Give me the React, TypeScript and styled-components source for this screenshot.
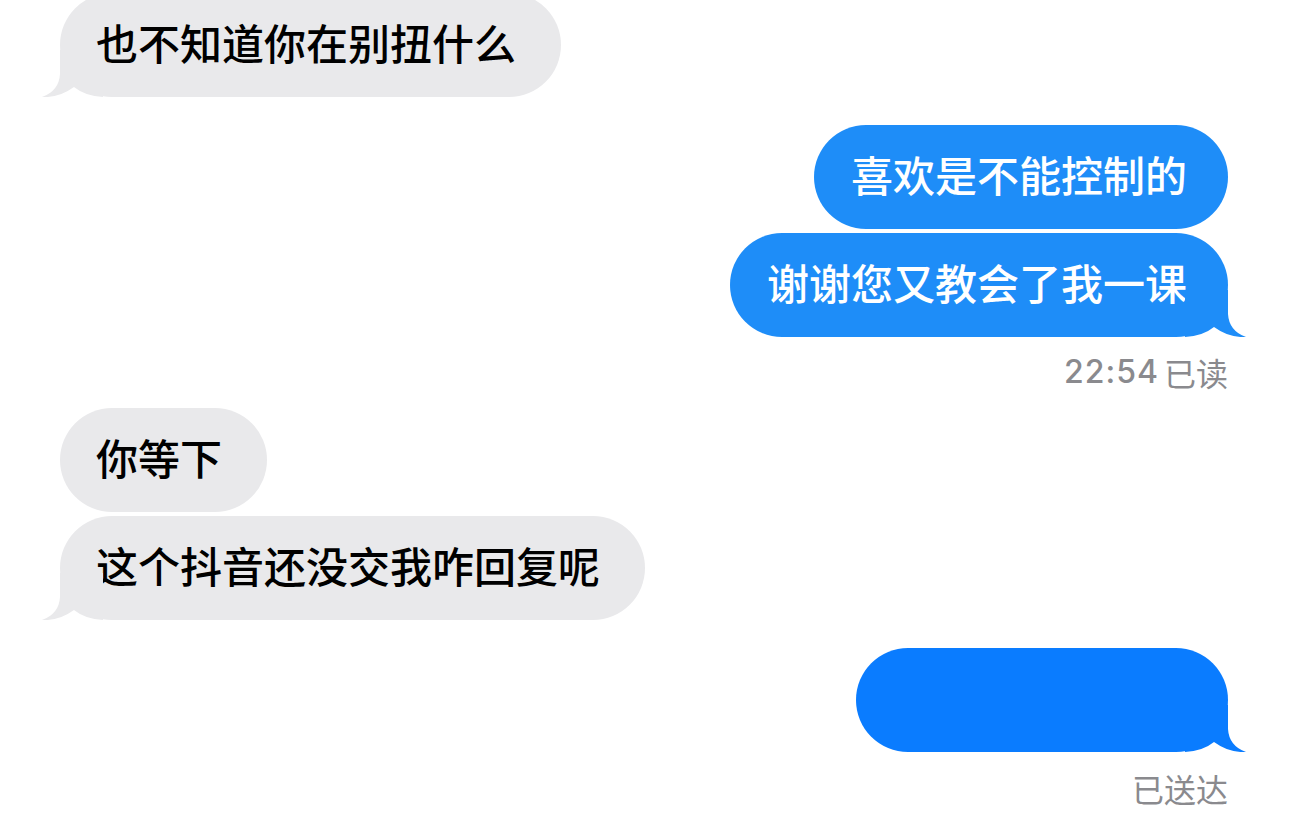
import React from "react";
import styled, { createGlobalStyle } from "styled-components";

const Global = createGlobalStyle`
  html, body { margin: 0; padding: 0; background: #ffffff; overflow: hidden; }
  body { font-family: "Noto Sans CJK SC", "Noto Sans", sans-serif; }
`;

const Thread = styled.div`
  width: 1290px;
  height: 830px;
  box-sizing: border-box;
  padding: 0 62px 0 60px;
  display: flex;
  flex-direction: column;
  overflow: hidden;
  margin-top: -7px;
`;

const Group = styled.div<{ $out?: boolean; $gap: number }>`
  display: flex;
  flex-direction: column;
  align-items: ${(p) => (p.$out ? "flex-end" : "flex-start")};
  gap: 4px;
  margin-top: ${(p) => p.$gap}px;
`;

const Bubble = styled.div<{ $out?: boolean; $tone?: "normal" | "vivid" }>`
  position: relative;
  box-sizing: border-box;
  height: 104px;
  padding: ${(p) => (p.$out ? "21px 41px 27px 37px" : "21px 45px 27px 36px")};
  border-radius: 52px;
  background: ${(p) =>
    p.$out ? (p.$tone === "vivid" ? "#0A7CFF" : "#1E8DF8") : "#E9E9EB"};
  color: ${(p) => (p.$out ? "#ffffff" : "#000000")};
  font-family: "Noto Sans CJK SC", sans-serif;
  font-size: 42px;
  font-weight: 500;
  line-height: 56px;
  white-space: nowrap;
`;

const Hidden = styled.span<{ $chars: number }>`
  display: inline-block;
  width: ${(p) => p.$chars * 42}px;
  height: 56px;
`;

const TailSvg = styled.svg<{ $out?: boolean }>`
  position: absolute;
  bottom: 0;
  width: 61px;
  height: 47px;
  ${(p) => (p.$out ? "right: -18px;" : "left: -18px; transform: scaleX(-1);")}
`;

const Tail: React.FC<{ out?: boolean; color: string }> = ({ out, color }) => (
  <TailSvg $out={out} viewBox="0 0 61 47" aria-hidden>
    <path
      d="M0 0 L43 0 L43 24 Q44 41 61 47 Q44 48 29 37 Q18 46 0 47 Z"
      fill={color}
    />
  </TailSvg>
);

const Status = styled.div<{ $gap: number }>`
  align-self: flex-end;
  display: flex;
  align-items: center;
  height: 40px;
  margin-top: ${(p) => p.$gap}px;
  font-family: "Noto Sans CJK SC", sans-serif;
  font-size: 32px;
  line-height: 40px;
  font-weight: 400;
  color: #8A8A8E;
`;

const Time = styled.span`
  font-family: Inter, "Noto Sans", sans-serif;
  font-weight: 500;
  letter-spacing: 1px;
  line-height: 40px;
  margin-right: 5px;
`;

const GRAY = "#E9E9EB";
const BLUE = "#1E8DF8";
const VIVID = "#0A7CFF";

export default function App() {
  return (
    <>
      <Global />
      <Thread>
        <Group $gap={0}>
          <Bubble>
            也不知道你在别扭什么
            <Tail color={GRAY} />
          </Bubble>
        </Group>

        <Group $out $gap={28}>
          <Bubble $out>喜欢是不能控制的</Bubble>
          <Bubble $out>
            谢谢您又教会了我一课
            <Tail out color={BLUE} />
          </Bubble>
        </Group>
        <Status $gap={15}>
          <Time>22:54</Time>已读
        </Status>

        <Group $gap={16}>
          <Bubble>你等下</Bubble>
          <Bubble>
            这个抖音还没交我咋回复呢
            <Tail color={GRAY} />
          </Bubble>
        </Group>

        <Group $out $gap={28}>
          <Bubble $out $tone="vivid">
            <Hidden $chars={7} />
            <Tail out color={VIVID} />
          </Bubble>
        </Group>
        <Status $gap={16}>已送达</Status>
      </Thread>
    </>
  );
}
